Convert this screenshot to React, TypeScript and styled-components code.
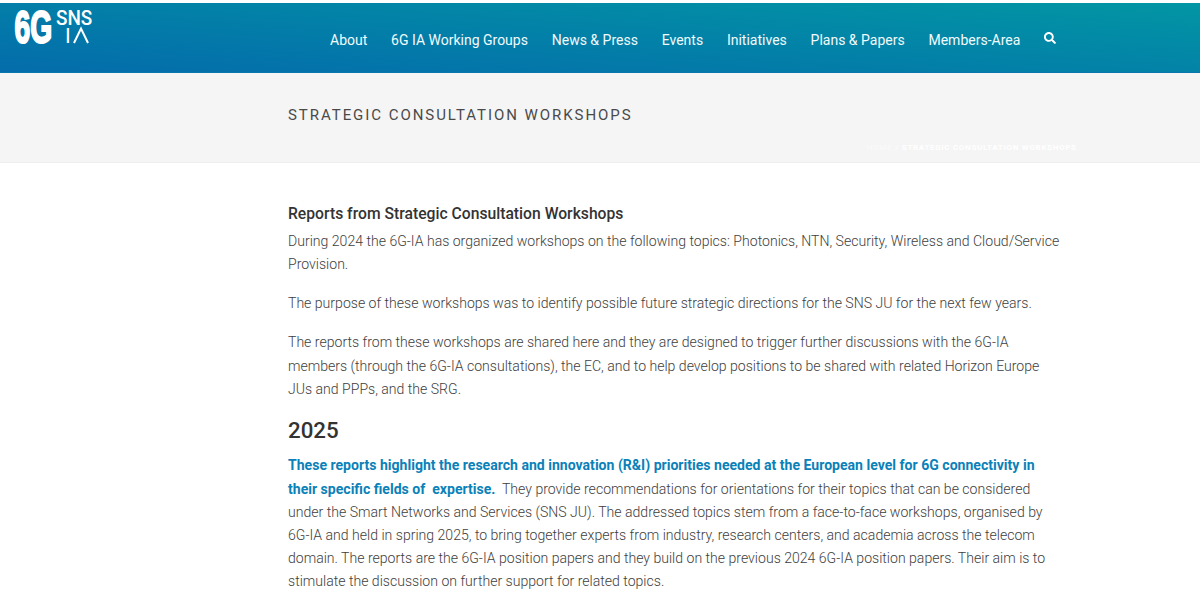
import * as React from "react";
import styled, { createGlobalStyle } from "styled-components";
import { FaSearch } from "react-icons/fa";

const Global = createGlobalStyle`
  html, body {
    margin: 0;
    padding: 0;
    height: 594px;
    overflow: hidden;
    background: #fff;
    font-family: Roboto, "Liberation Sans", sans-serif;
  }
`;

const Header = styled.header`
  margin-top: 3px;
  height: 70px;
  box-sizing: border-box;
  display: flex;
  background: linear-gradient(184deg, #0296a4 0%, #0379a9 68%, #046cab 100%);
  border-bottom: 1px solid #0a76ad;
`;

const LogoBox = styled.div`
  width: 330px;
  padding: 5px 0 0 14px;
  box-sizing: border-box;
`;

const Nav = styled.nav`
  display: flex;
  align-items: center;
  gap: 23.8px;
  height: 70px;
  padding-top: 4px;
  box-sizing: border-box;
`;

const NavLink = styled.a`
  color: #f2fafc;
  font-size: 14px;
  white-space: nowrap;
`;

const SearchButton = styled.span`
  display: flex;
  color: #fff;
  font-size: 12px;
  margin: -5px 0 0 0;
`;

const TitleBar = styled.div`
  height: 90px;
  box-sizing: border-box;
  background: #f5f5f5;
  border-bottom: 1px solid #eee;
  padding: 33px 0 0 288px;
  position: relative;
`;

const PageTitle = styled.h1`
  margin: 0;
  font-size: 15px;
  line-height: 18px;
  font-weight: 400;
  letter-spacing: 1.95px;
  color: #4a4a4a;
`;

const Crumbs = styled.div`
  position: absolute;
  top: 69px;
  left: 867px;
  font-size: 8px;
  line-height: 12px;
  letter-spacing: 0.68px;
  color: #fff;
  white-space: nowrap;
`;

const CrumbHome = styled.span`
  opacity: 0.6;
`;

const Content = styled.main`
  width: 776px;
  margin-left: 288px;
  padding-top: 39px;
  font-size: 14.07px;
  font-weight: 300;
  line-height: 23.2px;
  color: #3e3e3e;
`;

const Lead = styled.h3`
  margin: 0 0 5px;
  font-size: 15.7px;
  line-height: 23.2px;
  font-weight: 500;
  color: #333;
`;

const Para = styled.p`
  margin: 0 0 15.8px;
`;

const Year = styled.h2`
  margin: -1.5px 0 9px;
  font-size: 22.3px;
  line-height: 30px;
  font-weight: 500;
  color: #333;
`;

const Accent = styled.strong`
  font-weight: 700;
  color: #0a81b8;
`;

const Logo = () => (
  <svg width="84" height="42" viewBox="0 0 84 42" style={{ overflow: "visible" }}>
    <text transform="translate(0.5 34.5) scale(0.6 1)" fontFamily="Liberation Sans" fontWeight="700" fontSize="47" fill="#fff" stroke="#fff" strokeWidth="2.2">6G</text>
    <text transform="translate(42 17) scale(0.9 1)" fontFamily="Roboto" fontWeight="500" fontSize="21" fill="#fff">SNS</text>
    <text x="51" y="35" fontFamily="Roboto" fontWeight="400" fontSize="21" fill="#fff">I</text>
    <path d="M60 35l7-14.5 7 14.5" fill="none" stroke="#fff" strokeWidth="2" />
  </svg>
);

const navItems = ["About", "6G IA Working Groups", "News & Press", "Events", "Initiatives", "Plans & Papers", "Members-Area"];

export default function App() {
  return (
    <>
      <Global />
      <Header>
        <LogoBox>
          <Logo />
        </LogoBox>
        <Nav>
          {navItems.map((item) => (
            <NavLink key={item}>{item}</NavLink>
          ))}
          <SearchButton>
            <FaSearch />
          </SearchButton>
        </Nav>
      </Header>
      <TitleBar>
        <PageTitle>STRATEGIC CONSULTATION WORKSHOPS</PageTitle>
        <Crumbs>
          <CrumbHome>HOME</CrumbHome> / <b>STRATEGIC CONSULTATION WORKSHOPS</b>
        </Crumbs>
      </TitleBar>
      <Content>
        <Lead>Reports from Strategic Consultation Workshops</Lead>
        <Para>
          During 2024 the 6G-IA has organized workshops on the following topics: Photonics, NTN, Security, Wireless and Cloud/Service Provision.
        </Para>
        <Para>
          The purpose of these workshops was to identify possible future strategic directions for the SNS JU for the next few years.
        </Para>
        <Para>
          The reports from these workshops are shared here and they are designed to trigger further discussions with the 6G-IA members (through the 6G-IA consultations), the EC, and to help develop positions to be shared with related Horizon Europe JUs and PPPs, and the SRG.
        </Para>
        <Year>2025</Year>
        <Para>
          <Accent>
            These reports highlight the research and innovation (R&amp;I) priorities needed at the European level for 6G connectivity in their specific fields of&nbsp; expertise.
          </Accent>
          &nbsp; They provide recommendations for orientations for their topics that can be considered under the Smart Networks and Services (SNS JU). The addressed topics stem from a face-to-face workshops, organised by 6G-IA&nbsp;and held in spring 2025, to bring together experts from industry, research centers, and academia across the telecom domain. The reports are the 6G-IA position papers and they build on the previous 2024 6G-IA position papers. Their aim is to stimulate the discussion on further support for related topics.
        </Para>
      </Content>
    </>
  );
}
